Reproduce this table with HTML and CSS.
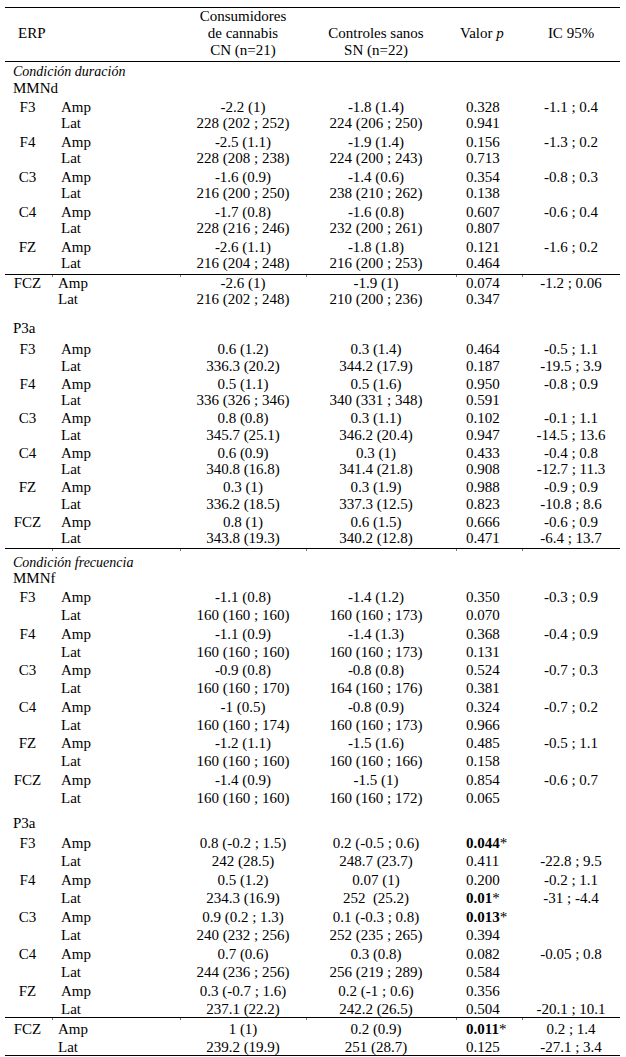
FILE: index.html
```html
<!DOCTYPE html>
<html lang="es">
<head>
<meta charset="utf-8">
<title>ERP</title>
<link rel="stylesheet" href="styles.css">
</head>
<body>
<div class="table">
  <div class="head">
    <span class="h1 mid">ERP</span>
    <span></span>
    <span class="c3">Consumidores<br>de cannabis<br>CN (n=21)</span>
    <span class="c4">Controles sanos<br>SN (n=22)</span>
    <span class="h5 mid">Valor <i>p</i></span>
    <span class="c6 mid">IC 95%</span>
  </div>

  <div class="row label cond1"><i>Condición duración</i></div>
  <div class="row label mmn">MMNd</div>

  <div class="sec mmnd">
    <div class="row amp"><span class="c1">F3</span><span class="c2">Amp</span><span class="c3">-2.2 (1)</span><span class="c4">-1.8 (1.4)</span><span class="c5">0.328</span><span class="c6">-1.1 ; 0.4</span></div>
    <div class="row lat"><span class="c1"></span><span class="c2">Lat</span><span class="c3">228 (202 ; 252)</span><span class="c4">224 (206 ; 250)</span><span class="c5">0.941</span><span class="c6"></span></div>
    <div class="row amp"><span class="c1">F4</span><span class="c2">Amp</span><span class="c3">-2.5 (1.1)</span><span class="c4">-1.9 (1.4)</span><span class="c5">0.156</span><span class="c6">-1.3 ; 0.2</span></div>
    <div class="row lat"><span class="c1"></span><span class="c2">Lat</span><span class="c3">228 (208 ; 238)</span><span class="c4">224 (200 ; 243)</span><span class="c5">0.713</span><span class="c6"></span></div>
    <div class="row amp"><span class="c1">C3</span><span class="c2">Amp</span><span class="c3">-1.6 (0.9)</span><span class="c4">-1.4 (0.6)</span><span class="c5">0.354</span><span class="c6">-0.8 ; 0.3</span></div>
    <div class="row lat"><span class="c1"></span><span class="c2">Lat</span><span class="c3">216 (200 ; 250)</span><span class="c4">238 (210 ; 262)</span><span class="c5">0.138</span><span class="c6"></span></div>
    <div class="row amp"><span class="c1">C4</span><span class="c2">Amp</span><span class="c3">-1.7 (0.8)</span><span class="c4">-1.6 (0.8)</span><span class="c5">0.607</span><span class="c6">-0.6 ; 0.4</span></div>
    <div class="row lat"><span class="c1"></span><span class="c2">Lat</span><span class="c3">228 (216 ; 246)</span><span class="c4">232 (200 ; 261)</span><span class="c5">0.807</span><span class="c6"></span></div>
    <div class="row amp"><span class="c1">FZ</span><span class="c2">Amp</span><span class="c3">-2.6 (1.1)</span><span class="c4">-1.8 (1.8)</span><span class="c5">0.121</span><span class="c6">-1.6 ; 0.2</span></div>
    <div class="row lat end"><span class="c1"></span><span class="c2">Lat</span><span class="c3">216 (204 ; 248)</span><span class="c4">216 (200 ; 253)</span><span class="c5">0.464</span><span class="c6"></span></div>
  </div>

  <div class="sec fczd">
    <div class="row amp rule"><span class="c1">FCZ</span><span class="c2 tight">Amp</span><span class="c3">-2.6 (1)</span><span class="c4">-1.9 (1)</span><span class="c5">0.074</span><span class="c6">-1.2 ; 0.06</span></div>
    <div class="row lat"><span class="c1"></span><span class="c2 tight">Lat</span><span class="c3">216 (202 ; 248)</span><span class="c4">210 (200 ; 236)</span><span class="c5">0.347</span><span class="c6"></span></div>
  </div>

  <div class="row label p3d-label">P3a</div>

  <div class="sec p3d">
    <div class="row amp first"><span class="c1">F3</span><span class="c2">Amp</span><span class="c3">0.6 (1.2)</span><span class="c4">0.3 (1.4)</span><span class="c5">0.464</span><span class="c6">-0.5 ; 1.1</span></div>
    <div class="row lat"><span class="c1"></span><span class="c2">Lat</span><span class="c3">336.3 (20.2)</span><span class="c4">344.2 (17.9)</span><span class="c5">0.187</span><span class="c6">-19.5 ; 3.9</span></div>
    <div class="row amp"><span class="c1">F4</span><span class="c2">Amp</span><span class="c3">0.5 (1.1)</span><span class="c4">0.5 (1.6)</span><span class="c5">0.950</span><span class="c6">-0.8 ; 0.9</span></div>
    <div class="row lat"><span class="c1"></span><span class="c2">Lat</span><span class="c3">336 (326 ; 346)</span><span class="c4">340 (331 ; 348)</span><span class="c5">0.591</span><span class="c6"></span></div>
    <div class="row amp"><span class="c1">C3</span><span class="c2">Amp</span><span class="c3">0.8 (0.8)</span><span class="c4">0.3 (1.1)</span><span class="c5">0.102</span><span class="c6">-0.1 ; 1.1</span></div>
    <div class="row lat"><span class="c1"></span><span class="c2">Lat</span><span class="c3">345.7 (25.1)</span><span class="c4">346.2 (20.4)</span><span class="c5">0.947</span><span class="c6">-14.5 ; 13.6</span></div>
    <div class="row amp"><span class="c1">C4</span><span class="c2">Amp</span><span class="c3">0.6 (0.9)</span><span class="c4">0.3 (1)</span><span class="c5">0.433</span><span class="c6">-0.4 ; 0.8</span></div>
    <div class="row lat"><span class="c1"></span><span class="c2">Lat</span><span class="c3">340.8 (16.8)</span><span class="c4">341.4 (21.8)</span><span class="c5">0.908</span><span class="c6">-12.7 ; 11.3</span></div>
    <div class="row amp"><span class="c1">FZ</span><span class="c2">Amp</span><span class="c3">0.3 (1)</span><span class="c4">0.3 (1.9)</span><span class="c5">0.988</span><span class="c6">-0.9 ; 0.9</span></div>
    <div class="row lat"><span class="c1"></span><span class="c2">Lat</span><span class="c3">336.2 (18.5)</span><span class="c4">337.3 (12.5)</span><span class="c5">0.823</span><span class="c6">-10.8 ; 8.6</span></div>
    <div class="row amp"><span class="c1">FCZ</span><span class="c2">Amp</span><span class="c3">0.8 (1)</span><span class="c4">0.6 (1.5)</span><span class="c5">0.666</span><span class="c6">-0.6 ; 0.9</span></div>
    <div class="row lat end"><span class="c1"></span><span class="c2">Lat</span><span class="c3">343.8 (19.3)</span><span class="c4">340.2 (12.8)</span><span class="c5">0.471</span><span class="c6">-6.4 ; 13.7</span></div>
  </div>

  <div class="row label cond2 rule"><i>Condición frecuencia</i></div>
  <div class="row label mmn">MMNf</div>

  <div class="sec mmnf">
    <div class="row amp first"><span class="c1">F3</span><span class="c2">Amp</span><span class="c3">-1.1 (0.8)</span><span class="c4">-1.4 (1.2)</span><span class="c5">0.350</span><span class="c6">-0.3 ; 0.9</span></div>
    <div class="row lat"><span class="c1"></span><span class="c2">Lat</span><span class="c3">160 (160 ; 160)</span><span class="c4">160 (160 ; 173)</span><span class="c5">0.070</span><span class="c6"></span></div>
    <div class="row amp"><span class="c1">F4</span><span class="c2">Amp</span><span class="c3">-1.1 (0.9)</span><span class="c4">-1.4 (1.3)</span><span class="c5">0.368</span><span class="c6">-0.4 ; 0.9</span></div>
    <div class="row lat"><span class="c1"></span><span class="c2">Lat</span><span class="c3">160 (160 ; 160)</span><span class="c4">160 (160 ; 173)</span><span class="c5">0.131</span><span class="c6"></span></div>
    <div class="row amp"><span class="c1">C3</span><span class="c2">Amp</span><span class="c3">-0.9 (0.8)</span><span class="c4">-0.8 (0.8)</span><span class="c5">0.524</span><span class="c6">-0.7 ; 0.3</span></div>
    <div class="row lat"><span class="c1"></span><span class="c2">Lat</span><span class="c3">160 (160 ; 170)</span><span class="c4">164 (160 ; 176)</span><span class="c5">0.381</span><span class="c6"></span></div>
    <div class="row amp"><span class="c1">C4</span><span class="c2">Amp</span><span class="c3">-1 (0.5)</span><span class="c4">-0.8 (0.9)</span><span class="c5">0.324</span><span class="c6">-0.7 ; 0.2</span></div>
    <div class="row lat"><span class="c1"></span><span class="c2">Lat</span><span class="c3">160 (160 ; 174)</span><span class="c4">160 (160 ; 173)</span><span class="c5">0.966</span><span class="c6"></span></div>
    <div class="row amp"><span class="c1">FZ</span><span class="c2">Amp</span><span class="c3">-1.2 (1.1)</span><span class="c4">-1.5 (1.6)</span><span class="c5">0.485</span><span class="c6">-0.5 ; 1.1</span></div>
    <div class="row lat"><span class="c1"></span><span class="c2">Lat</span><span class="c3">160 (160 ; 160)</span><span class="c4">160 (160 ; 166)</span><span class="c5">0.158</span><span class="c6"></span></div>
    <div class="row amp"><span class="c1">FCZ</span><span class="c2">Amp</span><span class="c3">-1.4 (0.9)</span><span class="c4">-1.5 (1)</span><span class="c5">0.854</span><span class="c6">-0.6 ; 0.7</span></div>
    <div class="row lat"><span class="c1"></span><span class="c2">Lat</span><span class="c3">160 (160 ; 160)</span><span class="c4">160 (160 ; 172)</span><span class="c5">0.065</span><span class="c6"></span></div>
  </div>

  <div class="row label p3f-label">P3a</div>

  <div class="sec p3f">
    <div class="row amp first"><span class="c1">F3</span><span class="c2">Amp</span><span class="c3">0.8 (-0.2 ; 1.5)</span><span class="c4">0.2 (-0.5 ; 0.6)</span><span class="c5"><b>0.044</b>*</span><span class="c6"></span></div>
    <div class="row lat"><span class="c1"></span><span class="c2">Lat</span><span class="c3">242 (28.5)</span><span class="c4">248.7 (23.7)</span><span class="c5">0.411</span><span class="c6">-22.8 ; 9.5</span></div>
    <div class="row amp"><span class="c1">F4</span><span class="c2">Amp</span><span class="c3">0.5 (1.2)</span><span class="c4">0.07 (1)</span><span class="c5">0.200</span><span class="c6">-0.2 ; 1.1</span></div>
    <div class="row lat"><span class="c1"></span><span class="c2">Lat</span><span class="c3">234.3 (16.9)</span><span class="c4">252&nbsp; (25.2)</span><span class="c5"><b>0.01</b>*</span><span class="c6">-31 ; -4.4</span></div>
    <div class="row amp"><span class="c1">C3</span><span class="c2">Amp</span><span class="c3">0.9 (0.2 ; 1.3)</span><span class="c4">0.1 (-0.3 ; 0.8)</span><span class="c5"><b>0.013</b>*</span><span class="c6"></span></div>
    <div class="row lat"><span class="c1"></span><span class="c2">Lat</span><span class="c3">240 (232 ; 256)</span><span class="c4">252 (235 ; 265)</span><span class="c5">0.394</span><span class="c6"></span></div>
    <div class="row amp"><span class="c1">C4</span><span class="c2">Amp</span><span class="c3">0.7 (0.6)</span><span class="c4">0.3 (0.8)</span><span class="c5">0.082</span><span class="c6">-0.05 ; 0.8</span></div>
    <div class="row lat"><span class="c1"></span><span class="c2">Lat</span><span class="c3">244 (236 ; 256)</span><span class="c4">256 (219 ; 289)</span><span class="c5">0.584</span><span class="c6"></span></div>
    <div class="row amp"><span class="c1">FZ</span><span class="c2">Amp</span><span class="c3">0.3 (-0.7 ; 1.6)</span><span class="c4">0.2 (-1 ; 0.6)</span><span class="c5">0.356</span><span class="c6"></span></div>
    <div class="row lat"><span class="c1"></span><span class="c2">Lat</span><span class="c3">237.1 (22.2)</span><span class="c4">242.2 (26.5)</span><span class="c5">0.504</span><span class="c6">-20.1 ; 10.1</span></div>
  </div>

  <div class="sec fczf">
    <div class="row amp rule"><span class="c1">FCZ</span><span class="c2 tight">Amp</span><span class="c3">1 (1)</span><span class="c4">0.2 (0.9)</span><span class="c5"><b>0.011</b>*</span><span class="c6">0.2 ; 1.4</span></div>
    <div class="row lat"><span class="c1"></span><span class="c2 tight">Lat</span><span class="c3">239.2 (19.9)</span><span class="c4">251 (28.7)</span><span class="c5">0.125</span><span class="c6">-27.1 ; 3.4</span></div>
  </div>
</div>
</body>
</html>
```

FILE: styles.css
```css
html, body {
  margin: 0;
  padding: 0;
  background: #ffffff;
}

body {
  font-family: "Liberation Serif", "Times New Roman", serif;
  font-size: 15px;
  color: #000000;
}

.table {
  width: 615px;
  margin: 7px 0 0 5px;
  border-top: 1px solid #000000;
}

.head,
.row {
  display: grid;
  grid-template-columns: 47px 128px 126px 150px 66px 98px;
  box-sizing: border-box;
  white-space: nowrap;
}

.head {
  height: 54px;
  padding-bottom: 2px;
  align-items: end;
  line-height: 17px;
  border-bottom: 1px solid #000000;
}

.head .mid {
  align-self: center;
}

.h1 {
  padding-left: 13px;
}

.h5 {
  padding-left: 4px;
}

.row {
  align-items: end;
  line-height: 16px;
}

.c1 {
  text-align: center;
  padding-right: 2px;
}

.c2 {
  padding-left: 9px;
}

.c2.tight {
  padding-left: 6px;
}

.c3 {
  text-align: center;
}

.c4 {
  text-align: center;
  padding-right: 10px;
}

.c5 {
  padding-left: 10px;
}

.c5 b {
  font-weight: bold;
}

.c6 {
  text-align: center;
}

/* section labels */
.label {
  display: block;
  padding-left: 8px;
  height: 17px;
  line-height: 16px;
  padding-top: 1px;
}

.label i {
  font-size: 14px;
}

.cond1 {
  height: 17px;
}

.mmn {
  height: 17px;
}

.p3d-label {
  height: 30px;
  padding-top: 14px;
}

.cond2 {
  height: 21px;
  padding-top: 5px;
}

.p3f-label {
  height: 25.5px;
  padding-top: 9.5px;
}

/* horizontal rules with the faint column ticks of the source table */
.rule {
  border-top: 1px solid #000000;
  background-image:
    linear-gradient(#777, #777),
    linear-gradient(#777, #777),
    linear-gradient(#777, #777),
    linear-gradient(#777, #777),
    linear-gradient(#777, #777);
  background-size: 1px 2px;
  background-repeat: no-repeat;
  background-position: 47px 0, 175px 0, 301px 0, 451px 0, 517px 0;
}

/* duration / MMNd */
.mmnd .amp { height: 19px; }
.mmnd .lat { height: 16px; }
.mmnd .lat.end {
  height: 19px;
  padding-bottom: 3px;
}

.fczd .amp { height: 17px; }
.fczd .lat { height: 15px; }

/* duration / P3a */
.p3d .amp { height: 18px; }
.p3d .lat { height: 16.5px; }
.p3d .amp.first { height: 21px; }
.p3d .lat.end {
  height: 18.5px;
  padding-bottom: 2px;
}

/* frequency / MMNf */
.mmnf .amp { height: 18.5px; }
.mmnf .lat { height: 18px; }
.mmnf .amp.first { height: 19px; }

/* frequency / P3a */
.p3f .amp,
.p3f .lat { height: 18.5px; }
.p3f .amp.first { height: 19.5px; }

.fczf .amp { height: 20px; }
.fczf .lat {
  height: 19px;
  border-bottom: 1px solid #000000;
}
```
